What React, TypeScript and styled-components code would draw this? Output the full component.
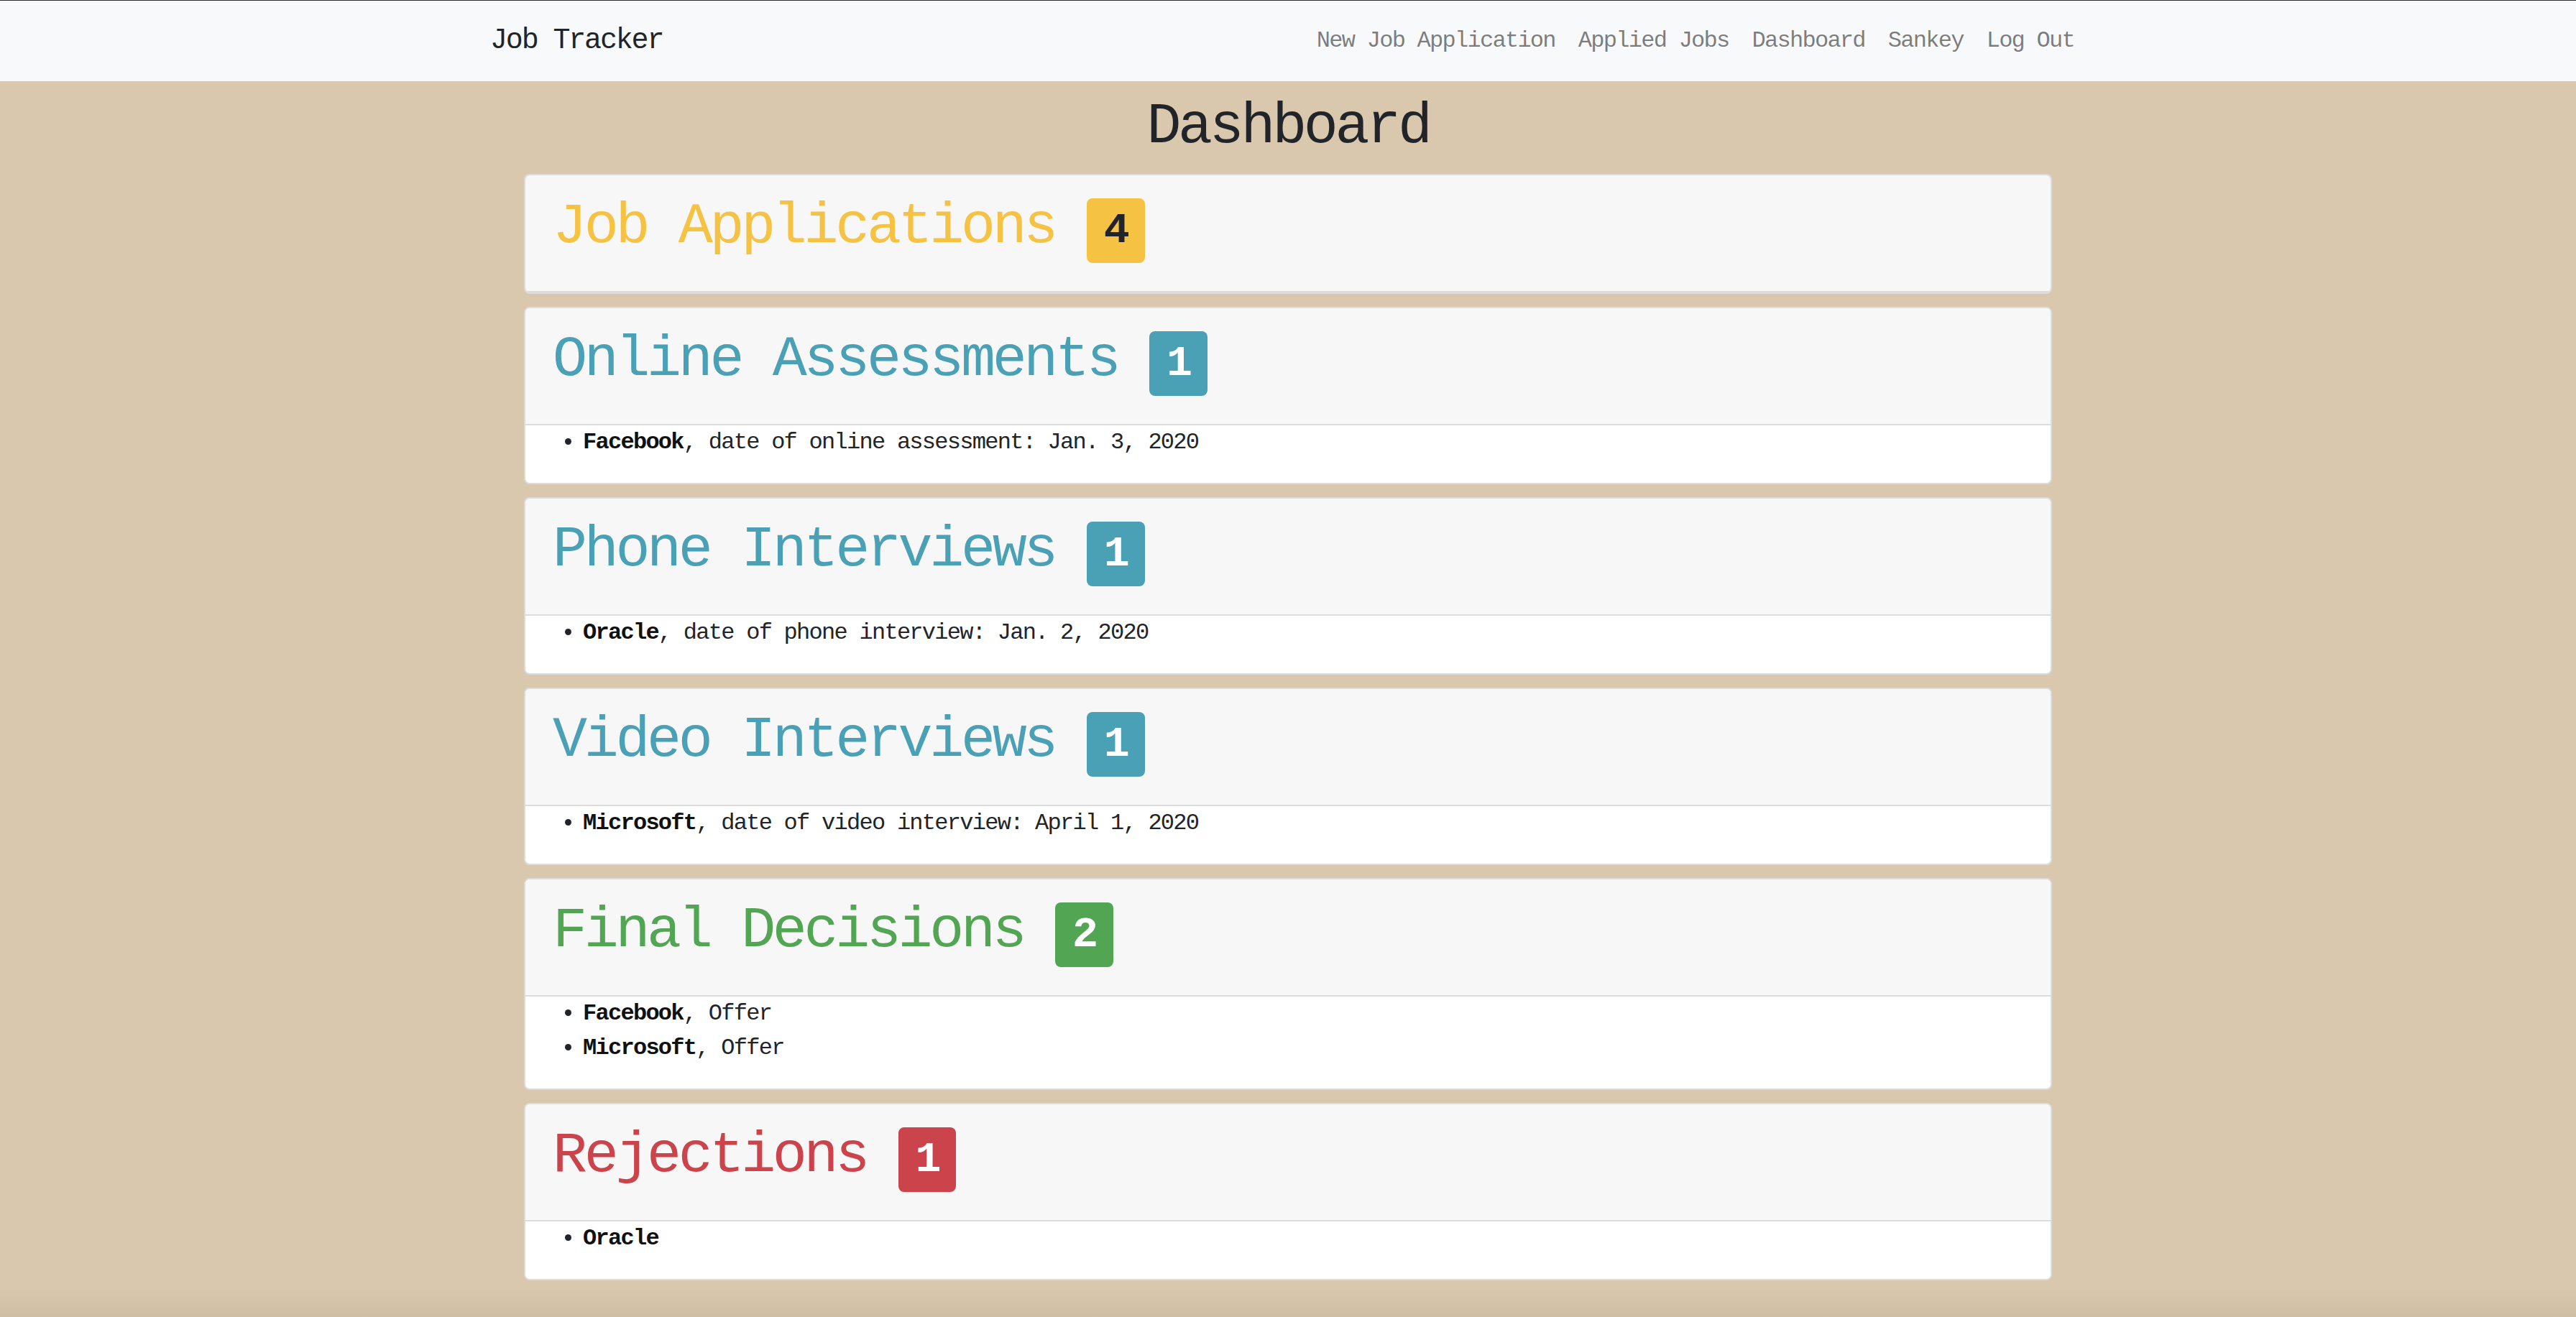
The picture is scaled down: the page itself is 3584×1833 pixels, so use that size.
import React from "react";
import styled, { createGlobalStyle } from "styled-components";

const GlobalStyle = createGlobalStyle`
  html, body {
    margin: 0;
    padding: 0;
  }
  body {
    background: #d9c8ae;
    font-family: "Liberation Mono", "DejaVu Sans Mono", monospace;
    color: #212529;
    font-size: 32px;
    line-height: 1.5;
  }
  * { box-sizing: border-box; }
`;

const Page = styled.div`
  min-height: 100vh;
  background: linear-gradient(
    to bottom,
    #d9c8ae 0,
    #d9c8ae calc(100% - 44px),
    #cfbea3 100%
  );
  padding-bottom: 1px;
`;

const NavBar = styled.nav`
  background: #f8f9fa;
  border-top: 1px solid #2e2e2e;
  padding: 16px 0;
`;

const NavContainer = styled.div`
  max-width: 2280px;
  margin: 0 auto;
  padding: 0 30px;
  display: flex;
  align-items: center;
  justify-content: space-between;
`;

const Brand = styled.a`
  font-size: 40px;
  line-height: 60px;
  letter-spacing: -0.054em;
  padding: 10px 0;
  color: #212529;
  text-decoration: none;
  white-space: nowrap;
`;

const NavList = styled.ul`
  display: flex;
  list-style: none;
  margin: 0;
  padding: 0;
`;

const NavLink = styled.a`
  display: block;
  padding: 16px 16px;
  font-size: 32px;
  line-height: 48px;
  letter-spacing: -0.054em;
  color: rgba(0, 0, 0, 0.5);
  text-decoration: none;
  white-space: nowrap;
`;

const Main = styled.main`
  max-width: 2126px;
  margin: 0 auto;
`;

const PageTitle = styled.h1`
  text-align: center;
  font-size: 80px;
  font-weight: 400;
  line-height: 1.2;
  letter-spacing: -0.054em;
  margin: 16px 0 17px;
  color: #212529;
`;

const Card = styled.section`
  background: #fff;
  border: 2px solid #dcdcdc;
  border-radius: 8px;
  margin-bottom: 18px;
  overflow: hidden;
`;

const CardHeader = styled.div`
  background: #f7f7f7;
  padding: 24px 38px;
  border-bottom: 2px solid #dcdcdc;
`;

const tones = {
  warning: { bg: "#f6c244", fg: "#212529" },
  info: { bg: "#4aa0b5", fg: "#ffffff" },
  success: { bg: "#52a552", fg: "#ffffff" },
  danger: { bg: "#cc444b", fg: "#ffffff" },
};

type Tone = keyof typeof tones;

const CardTitle = styled.h1<{ $tone: Tone }>`
  font-size: 80px;
  font-weight: 400;
  line-height: 1.2;
  letter-spacing: -0.054em;
  margin: 0 0 15px;
  color: ${(p) => tones[p.$tone].bg};
  white-space: nowrap;
`;

const Badge = styled.span<{ $tone: Tone }>`
  display: inline-block;
  padding: 15px 24px;
  font-size: 60px;
  font-weight: 700;
  line-height: 1;
  letter-spacing: -0.054em;
  border-radius: 8px;
  vertical-align: baseline;
  background: ${(p) => tones[p.$tone].bg};
  color: ${(p) => tones[p.$tone].fg};
`;

const ItemList = styled.ul`
  margin: 0 0 32px;
  padding-left: 80px;
  font-size: 32px;
  line-height: 48px;
  letter-spacing: -0.054em;
`;

const Company = styled.b`
  font-weight: 700;
  color: #111;
`;

type Item = { company: string; detail?: string };

const sections: { title: string; count: number; tone: Tone; items: Item[] }[] = [
  { title: "Job Applications", count: 4, tone: "warning", items: [] },
  {
    title: "Online Assessments",
    count: 1,
    tone: "info",
    items: [{ company: "Facebook", detail: "date of online assessment: Jan. 3, 2020" }],
  },
  {
    title: "Phone Interviews",
    count: 1,
    tone: "info",
    items: [{ company: "Oracle", detail: "date of phone interview: Jan. 2, 2020" }],
  },
  {
    title: "Video Interviews",
    count: 1,
    tone: "info",
    items: [{ company: "Microsoft", detail: "date of video interview: April 1, 2020" }],
  },
  {
    title: "Final Decisions",
    count: 2,
    tone: "success",
    items: [
      { company: "Facebook", detail: "Offer" },
      { company: "Microsoft", detail: "Offer" },
    ],
  },
  {
    title: "Rejections",
    count: 1,
    tone: "danger",
    items: [{ company: "Oracle" }],
  },
];

export default function App() {
  return (
    <>
      <GlobalStyle />
      <Page>
        <NavBar>
          <NavContainer>
            <Brand href="#">Job Tracker</Brand>
            <NavList>
              {["New Job Application", "Applied Jobs", "Dashboard", "Sankey", "Log Out"].map(
                (l) => (
                  <li key={l}>
                    <NavLink href="#">{l}</NavLink>
                  </li>
                )
              )}
            </NavList>
          </NavContainer>
        </NavBar>
        <Main>
          <PageTitle>Dashboard</PageTitle>
          {sections.map((s) => (
            <Card key={s.title}>
              <CardHeader>
                <CardTitle $tone={s.tone}>
                  {s.title} <Badge $tone={s.tone}>{s.count}</Badge>
                </CardTitle>
              </CardHeader>
              {s.items.length > 0 && (
                <ItemList>
                  {s.items.map((it, i) => (
                    <li key={i}>
                      <Company>{it.company}</Company>
                      {it.detail ? `, ${it.detail}` : ""}
                    </li>
                  ))}
                </ItemList>
              )}
            </Card>
          ))}
        </Main>
      </Page>
    </>
  );
}
